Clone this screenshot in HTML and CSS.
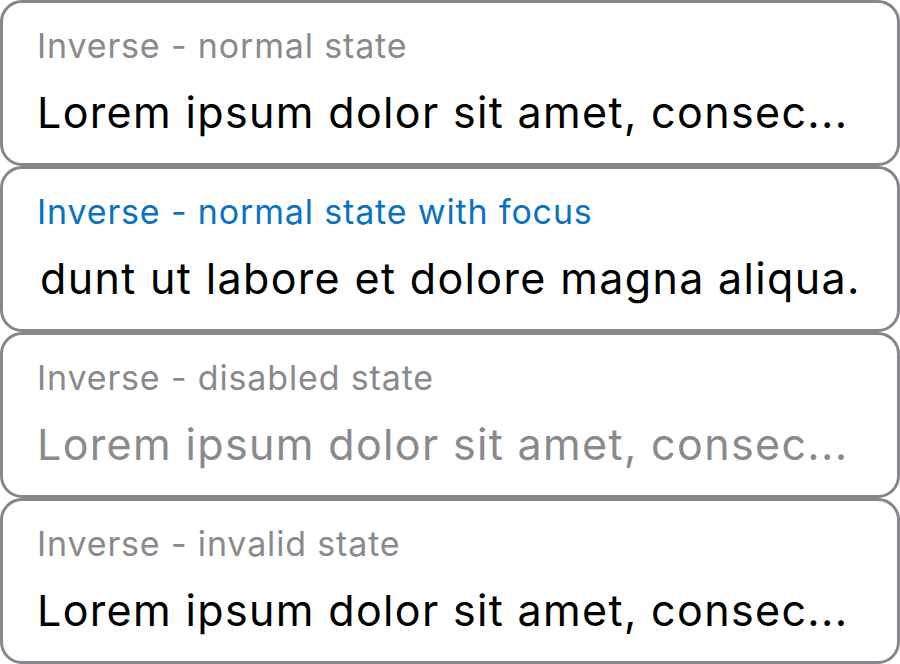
FILE: index.html
```html
<!DOCTYPE html>
<html>
<head>
<meta charset="utf-8">
<link rel="stylesheet" href="styles.css">
</head>
<body>
<div class="list">
  <div class="field">
    <div class="label">Inverse - normal state</div>
    <div class="value">Lorem ipsum dolor sit amet, consec...</div>
  </div>
  <div class="field">
    <div class="label label-focus">Inverse - normal state with focus</div>
    <div class="value value-scrolled">dunt ut labore et dolore magna aliqua.</div>
  </div>
  <div class="field">
    <div class="label">Inverse - disabled state</div>
    <div class="value value-disabled">Lorem ipsum dolor sit amet, consec...</div>
  </div>
  <div class="field">
    <div class="label">Inverse - invalid state</div>
    <div class="value">Lorem ipsum dolor sit amet, consec...</div>
  </div>
</div>
</body>
</html>
```
FILE: styles.css
```css
html, body {
  margin: 0;
  padding: 0;
  background: #ffffff;
}
body {
  font-family: Inter, "Noto Sans", sans-serif;
}
.list {
  display: flex;
  flex-direction: column;
  width: 900px;
}
.field {
  box-sizing: border-box;
  height: 166px;
  border: 3px solid #87878b;
  border-radius: 22px;
  padding: 0 0 0 34px;
  display: flex;
  flex-direction: column;
  overflow: hidden;
}
.label {
  font-size: 34px;
  line-height: 36px;
  letter-spacing: 0.85px;
  margin-top: 25px;
  color: #8a8a8e;
  white-space: nowrap;
}
.label-focus {
  color: #0a72c2;
}
.value {
  font-size: 43px;
  line-height: 50px;
  letter-spacing: 1.35px;
  margin-top: 23px;
  color: #000000;
  white-space: nowrap;
}
.value-scrolled {
  padding-left: 3px;
}
.value-disabled {
  color: #8a8a8e;
}
```
